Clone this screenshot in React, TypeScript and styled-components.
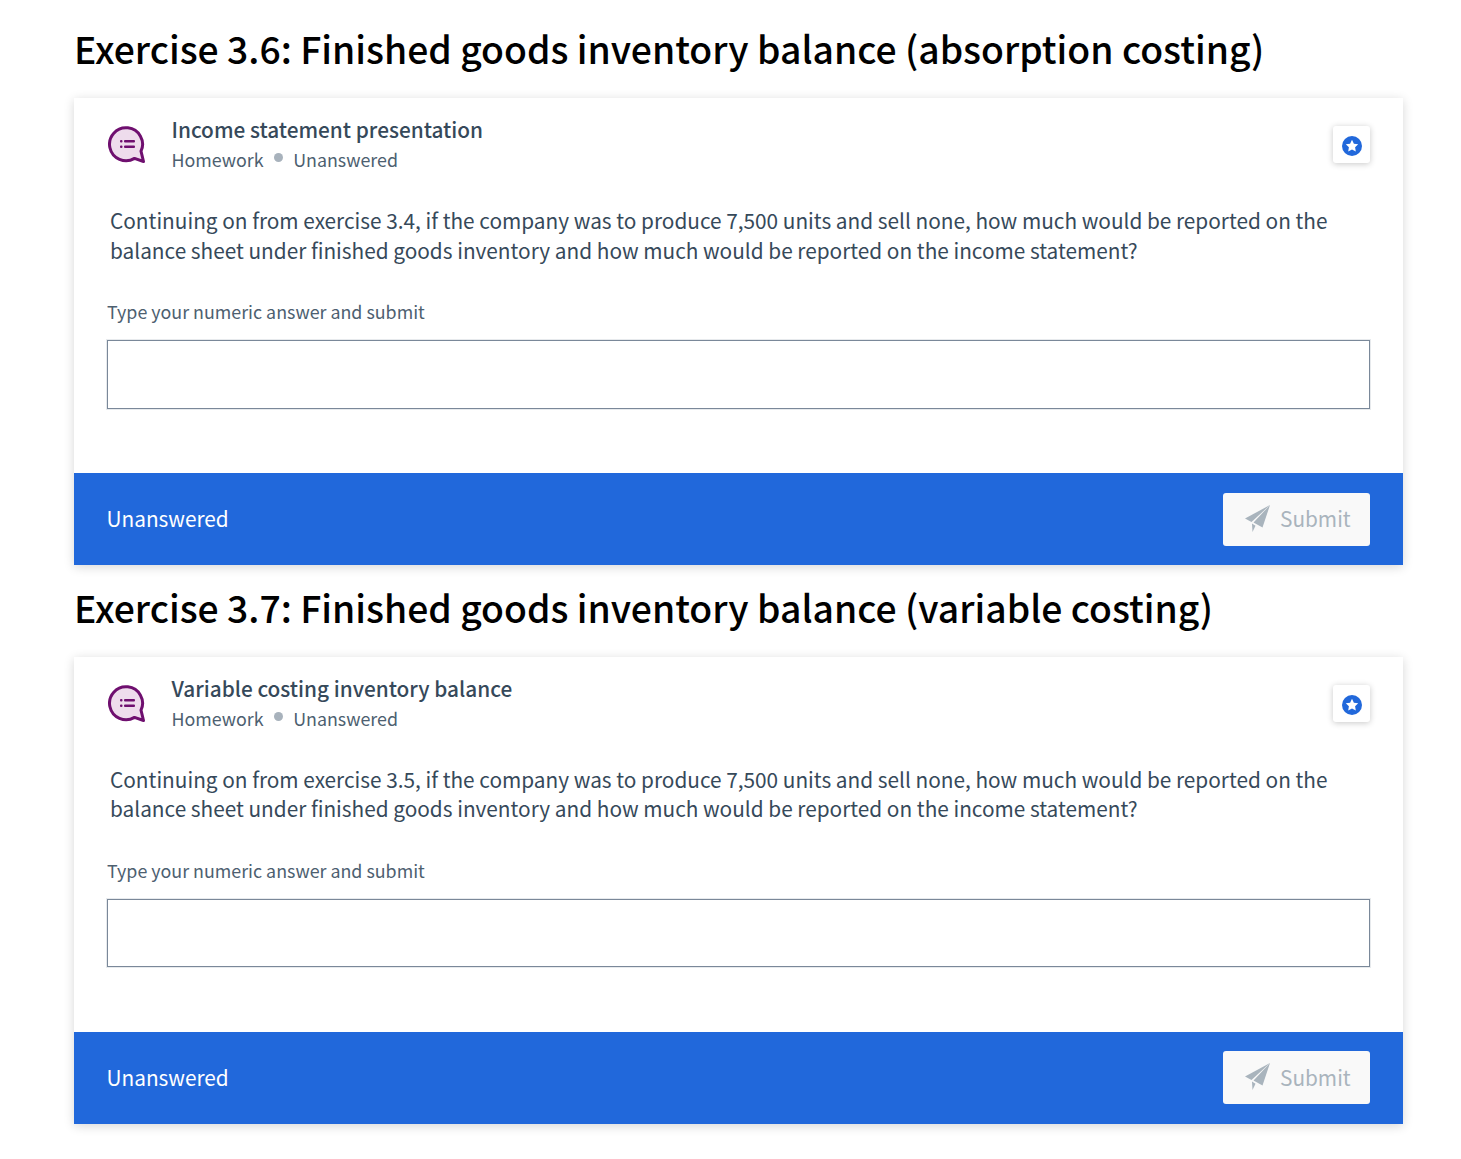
import React from "react";
import styled, { createGlobalStyle } from "styled-components";

const GlobalStyle = createGlobalStyle`
  html, body {
    margin: 0;
    padding: 0;
    background: #fff;
    font-family: "Noto Sans CJK JP", "Noto Sans", sans-serif;
  }
`;

const Page = styled.div`
  padding: 21.4px 58px 34px 74px;
  display: flex;
  flex-direction: column;
`;

const Heading = styled.h2`
  margin: 0 0 20.8px;
  font-size: 37.3px;
  line-height: 55.6px;
  font-weight: 500;
  color: #000;
`;

const Card = styled.section`
  background: #fff;
  box-shadow: 0 2px 10px rgba(0, 0, 0, 0.16);
  margin-bottom: 14.7px;
`;

const Body = styled.div`
  padding: 18.2px 33px 64.2px 33px;
`;

const Top = styled.div`
  display: flex;
  align-items: flex-start;
`;

const BubbleIcon = styled.svg`
  width: 37px;
  height: 37px;
  margin: 10px 26.5px 0 1px;
  flex-shrink: 0;
`;

const Meta = styled.div`
  flex: 1;
`;

const Title = styled.div`
  font-size: 20.8px;
  line-height: 26px;
  font-weight: 500;
  color: #36495a;
`;

const Sub = styled.div`
  display: flex;
  align-items: center;
  margin-top: 4px;
  font-size: 17.85px;
  line-height: 26px;
  color: #4d6070;
`;

const Dot = styled.span`
  width: 9px;
  height: 9px;
  margin: -2px 10.5px 0 10px;
  border-radius: 50%;
  background: #a8b2bc;
`;

const StarButton = styled.button`
  width: 37px;
  height: 37px;
  margin-top: 10px;
  padding: 3px 0 0;
  border: 0;
  border-radius: 3px;
  background: #fff;
  box-shadow: 0 1px 6px rgba(0, 0, 0, 0.22);
  display: flex;
  align-items: center;
  justify-content: center;
`;

const Question = styled.p`
  margin: 34.2px 0 0 3px;
  font-size: 20.8px;
  line-height: 29.4px;
  color: #36495a;
`;

const Label = styled.label`
  display: block;
  margin-top: 31.2px;
  font-size: 17.85px;
  line-height: 30px;
  color: #4d6070;
`;

const AnswerInput = styled.input`
  display: block;
  box-sizing: border-box;
  width: 100%;
  height: 68.6px;
  margin-top: 14px;
  border: 1px solid #7a8899;
  box-shadow: 0 0 0 1px rgba(122, 136, 153, 0.18);
  background: #fff;
  outline: none;
`;

const Footer = styled.div`
  height: 92.5px;
  box-sizing: border-box;
  padding: 0 33px 0 32.5px;
  background: #2168db;
  display: flex;
  align-items: center;
  justify-content: space-between;
`;

const Status = styled.span`
  padding-bottom: 2px;
  font-size: 20.8px;
  color: #fff;
`;

const SubmitButton = styled.button`
  width: 147px;
  height: 53px;
  padding: 0 0 2px 21.5px;
  border: 0;
  border-radius: 3px;
  background: #f9f9f9;
  color: #a9b4bd;
  font-family: inherit;
  font-size: 20.8px;
  display: flex;
  align-items: center;
  gap: 10.5px;
`;

const Bubble = () => (
  <BubbleIcon viewBox="0 0 37 37">
    <path
      d="M33 25.2A16.5 16.500 0 1 0 26.500 32.400L35.500 35.500Z"
      fill="#eedcec"
      stroke="#6f0f6f"
      strokeWidth="3"
      strokeLinejoin="round"
    />
    <rect x="12" y="14" width="2.500" height="2.500" rx="1" fill="#6f0f6f" />
    <rect x="12" y="19.500" width="2.500" height="2.500" rx="1" fill="#6f0f6f" />
    <rect x="16" y="14" width="11" height="2.500" rx="1" fill="#6f0f6f" />
    <rect x="16" y="19.500" width="11" height="2.500" rx="1" fill="#6f0f6f" />
  </BubbleIcon>
);

const Star = () => (
  <svg width="20" height="20" viewBox="0 0 20 20">
    <circle cx="10" cy="10" r="10" fill="#2168db" />
    <path
      d="M10 3.800l1.900 3.900 4.300.6-3.100 3 .7 4.300-3.800-2-3.800 2 .7-4.300-3.100-3 4.300-.6z"
      fill="#fff"
    />
  </svg>
);

const Plane = () => (
  <svg width="25" height="27" viewBox="0 0 25 27">
    <path d="M25 0L0 13.500l6.500 3.500z" fill="#a9b4bd" />
    <path d="M25 0L8.500 17.500l9 5z" fill="#a9b4bd" />
    <path d="M7 18.500l3.500 2.300L7.500 27z" fill="#a9b4bd" />
  </svg>
);

type Exercise = {
  heading: string;
  title: string;
  question: string;
};

const exercises: Exercise[] = [
  {
    heading: "Exercise 3.6: Finished goods inventory balance (absorption costing)",
    title: "Income statement presentation",
    question:
      "Continuing on from exercise 3.4, if the company was to produce 7,500 units and sell none, how much would be reported on the balance sheet under finished goods inventory and how much would be reported on the income statement?",
  },
  {
    heading: "Exercise 3.7: Finished goods inventory balance (variable costing)",
    title: "Variable costing inventory balance",
    question:
      "Continuing on from exercise 3.5, if the company was to produce 7,500 units and sell none, how much would be reported on the balance sheet under finished goods inventory and how much would be reported on the income statement?",
  },
];

export default function App() {
  return (
    <Page>
      <GlobalStyle />
      {exercises.map(ex => (
        <React.Fragment key={ex.heading}>
          <Heading>{ex.heading}</Heading>
          <Card>
            <Body>
              <Top>
                <Bubble />
                <Meta>
                  <Title>{ex.title}</Title>
                  <Sub>
                    Homework
                    <Dot />
                    Unanswered
                  </Sub>
                </Meta>
                <StarButton>
                  <Star />
                </StarButton>
              </Top>
              <Question>{ex.question}</Question>
              <Label>Type your numeric answer and submit</Label>
              <AnswerInput />
            </Body>
            <Footer>
              <Status>Unanswered</Status>
              <SubmitButton>
                <Plane />
                Submit
              </SubmitButton>
            </Footer>
          </Card>
        </React.Fragment>
      ))}
    </Page>
  );
}
